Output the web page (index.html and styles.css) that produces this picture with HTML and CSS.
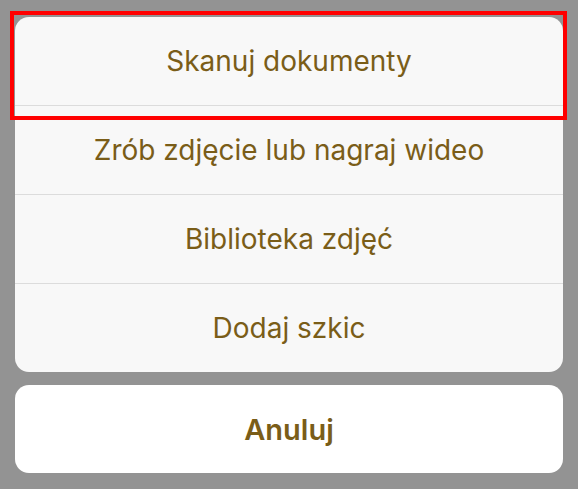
FILE: index.html
```html
<!DOCTYPE html>
<html lang="pl">

<head>
    <meta charset="UTF-8" />
    <meta name="viewport" content="width=device-width, initial-scale=1.0" />
    <title>Arkusz akcji</title>
    <link rel="stylesheet" href="styles.css">
</head>

<body>
    <div class="sheet">
        <div class="options">
            <div class="option highlighted">
                Skanuj dokumenty
                <span class="marker"></span>
            </div>
            <div class="option">Zrób zdjęcie lub nagraj wideo</div>
            <div class="option">Biblioteka zdjęć</div>
            <div class="option">Dodaj szkic</div>
        </div>
        <div class="cancel">Anuluj</div>
    </div>
</body>

</html>
```

FILE: styles.css
```css
:root {
    --bg: #939393;
    --card: #f8f8f8;
    --line: #dcdcdc;
    --text: #7a5d18;
    --marker: #ff0000;
}

body {
    margin: 0;
    background-color: var(--bg);
    font-family: Inter, "Liberation Sans", sans-serif;
    color: var(--text);
}

.sheet {
    display: flex;
    flex-direction: column;
    gap: 13px;
    padding: 17px 15px 16px;
}

.options {
    background-color: var(--card);
    border-radius: 14px;
}

.option {
    position: relative;
    height: 88px;
    display: flex;
    align-items: center;
    justify-content: center;
    font-size: 28px;
    border-top: 1px solid var(--line);
}

.option:first-child {
    border-top: none;
}

.marker {
    position: absolute;
    left: -5px;
    top: -6px;
    width: 557px;
    height: 109px;
    box-sizing: border-box;
    border: 4px solid var(--marker);
}

.cancel {
    background-color: #fff;
    border-radius: 14px;
    height: 88px;
    display: flex;
    align-items: center;
    justify-content: center;
    font-size: 29px;
    font-weight: 600;
}
```
